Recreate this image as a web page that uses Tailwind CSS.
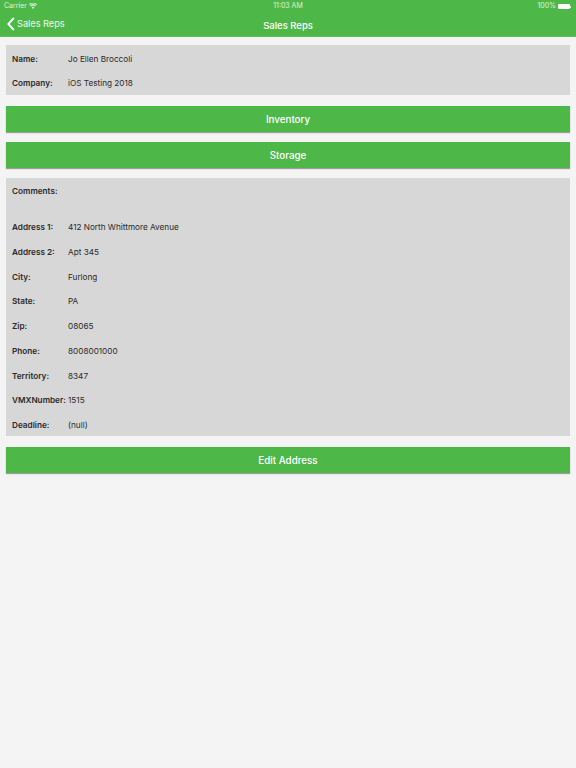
<!DOCTYPE html>
<html lang="en">
<head>
<meta charset="UTF-8">
<script src="https://cdn.jsdelivr.net/npm/@tailwindcss/browser@4"></script>
<title>Sales Reps</title>
</head>
<body class="w-[576px] h-[768px] overflow-hidden bg-[#f4f4f4] font-['Inter',sans-serif] text-[#2a2a2a]">
  <header class="h-[37px] bg-[#4db848] text-white border-b border-[#5fc05a]">
    <div class="h-[12px] pt-[1px] relative flex items-center justify-between pl-[4px] pr-[5px] text-[7px] text-white/80">
      <div class="flex items-center gap-[3px]">
        <span>Carrier</span>
        <svg class="w-[8px] h-[6px] -mt-[1px] -ml-[0.5px]" viewBox="0 0 16 12" fill="currentColor"><path d="M8 12 L5.4 8.8 A4 4 0 0 1 10.6 8.8 Z M3.9 7 L2.2 5 A9 9 0 0 1 13.8 5 L12.1 7 A6.4 6.4 0 0 0 3.9 7 Z M1.2 3.8 L0 2.4 A12.5 12.5 0 0 1 16 2.4 L14.8 3.8 A10.6 10.6 0 0 0 1.2 3.8 Z"/></svg>
      </div>
      <span class="absolute left-0 right-0 text-center">11:03 AM</span>
      <div class="flex items-center gap-[2px]">
        <span>100%</span>
        <div class="w-[12px] h-[5px] bg-white rounded-[1px]"></div>
        <div class="w-[1px] h-[2px] -ml-[2px] bg-white/80"></div>
      </div>
    </div>
    <div class="h-[24px] pt-[4px] relative flex items-center justify-center text-[9.5px] font-medium">
      <div class="absolute left-[7px] top-[5px] flex items-center gap-[2px] font-normal text-[9.2px] text-white/90">
        <svg class="w-[8px] h-[14px]" viewBox="0 0 8 14" fill="none" stroke="currentColor" stroke-width="2"><path d="M6.8 1 L1.4 7 L6.8 13"/></svg>
        <span>Sales Reps</span>
      </div>
      <span>Sales Reps</span>
    </div>
  </header>

  <main class="px-[6px] pt-[8px] flex flex-col text-[8.2px]">
    <section class="h-[50px] bg-[#d7d7d7] pt-[1.5px]">
      <div class="h-[24.5px] flex items-center pl-[6px]"><b class="w-[56px] font-semibold">Name:</b><span>Jo Ellen Broccoli</span></div>
      <div class="h-[24.5px] flex items-center pl-[6px]"><b class="w-[56px] font-semibold">Company:</b><span>iOS Testing 2018</span></div>
    </section>

    <button class="mt-[11px] h-[25.5px] pt-[3px] bg-[#4db848] text-white text-[9.8px] font-medium shadow-[0_1px_1px_rgba(0,0,0,0.35)]">Inventory</button>
    <button class="mt-[10.5px] h-[25.5px] pt-[3px] bg-[#4db848] text-white text-[9.8px] font-medium shadow-[0_1px_1px_rgba(0,0,0,0.35)]">Storage</button>

    <section class="mt-[10.5px] h-[258px] bg-[#d7d7d7] pt-[1px]">
      <div class="h-[24.7px] flex items-center pl-[6px]"><b class="w-[56px] font-semibold">Comments:</b></div>
      <div class="h-[11.5px]"></div>
      <div class="h-[24.7px] flex items-center pl-[6px]"><b class="w-[56px] font-semibold">Address 1:</b><span>412 North Whittmore Avenue</span></div>
      <div class="h-[24.7px] flex items-center pl-[6px]"><b class="w-[56px] font-semibold">Address 2:</b><span>Apt 345</span></div>
      <div class="h-[24.7px] flex items-center pl-[6px]"><b class="w-[56px] font-semibold">City:</b><span>Furlong</span></div>
      <div class="h-[24.7px] flex items-center pl-[6px]"><b class="w-[56px] font-semibold">State:</b><span>PA</span></div>
      <div class="h-[24.7px] flex items-center pl-[6px]"><b class="w-[56px] font-semibold">Zip:</b><span>08065</span></div>
      <div class="h-[24.7px] flex items-center pl-[6px]"><b class="w-[56px] font-semibold">Phone:</b><span>8008001000</span></div>
      <div class="h-[24.7px] flex items-center pl-[6px]"><b class="w-[56px] font-semibold">Territory:</b><span>8347</span></div>
      <div class="h-[24.7px] flex items-center pl-[6px]"><b class="w-[56px] font-semibold">VMXNumber:</b><span>1515</span></div>
      <div class="h-[24.7px] flex items-center pl-[6px]"><b class="w-[56px] font-semibold">Deadline:</b><span>(null)</span></div>
    </section>

    <button class="mt-[11px] h-[25.5px] pt-[3px] bg-[#4db848] text-white text-[9.8px] font-medium shadow-[0_1px_1px_rgba(0,0,0,0.35)]">Edit Address</button>
  </main>
</body>
</html>
